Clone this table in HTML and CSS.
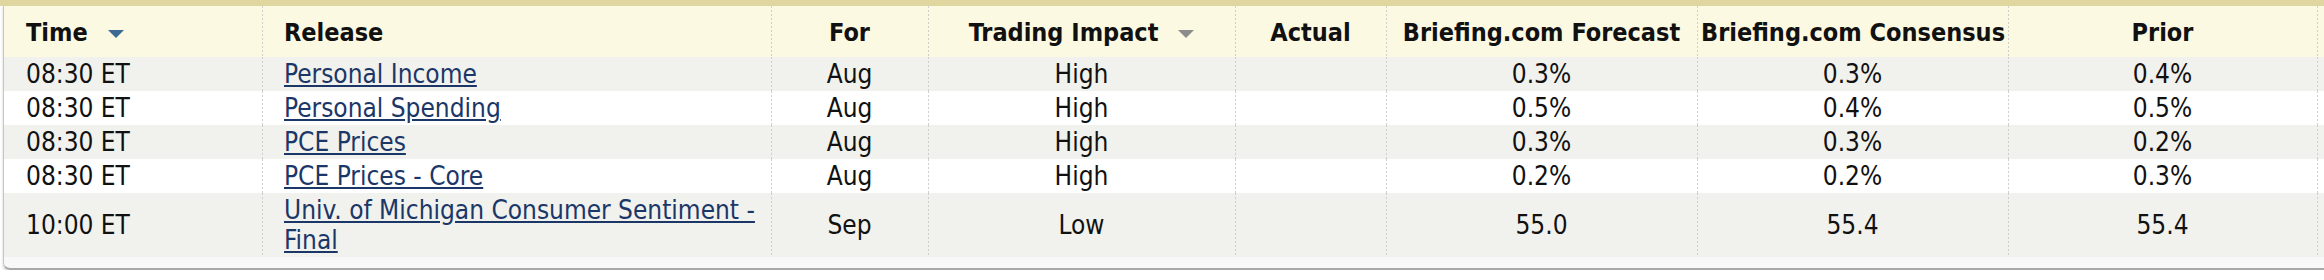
FILE: index.html
```html
<!DOCTYPE html>
<html lang="en">
<head>
    <meta charset="UTF-8">
    <title>Economic Calendar</title>
    <link rel="stylesheet" href="styles.css">
</head>
<body>
    <div class="topbar"></div>
    <div class="panel">
        <table class="calendar">
            <colgroup>
                <col class="c-time">
                <col class="c-release">
                <col class="c-for">
                <col class="c-impact">
                <col class="c-actual">
                <col class="c-forecast">
                <col class="c-consensus">
                <col class="c-prior">
                <col class="c-rest">
            </colgroup>
            <thead>
                <tr>
                    <th class="left">Time <span class="sort active"></span></th>
                    <th class="left">Release</th>
                    <th>For</th>
                    <th>Trading Impact <span class="sort"></span></th>
                    <th>Actual</th>
                    <th>Briefing.com Forecast</th>
                    <th>Briefing.com Consensus</th>
                    <th>Prior</th>
                    <th></th>
                </tr>
            </thead>
            <tbody>
                <tr>
                    <td class="left">08:30 ET</td>
                    <td class="left"><a href="#">Personal Income</a></td>
                    <td>Aug</td>
                    <td>High</td>
                    <td></td>
                    <td>0.3%</td>
                    <td>0.3%</td>
                    <td>0.4%</td>
                    <td></td>
                </tr>
                <tr>
                    <td class="left">08:30 ET</td>
                    <td class="left"><a href="#">Personal Spending</a></td>
                    <td>Aug</td>
                    <td>High</td>
                    <td></td>
                    <td>0.5%</td>
                    <td>0.4%</td>
                    <td>0.5%</td>
                    <td></td>
                </tr>
                <tr>
                    <td class="left">08:30 ET</td>
                    <td class="left"><a href="#">PCE Prices</a></td>
                    <td>Aug</td>
                    <td>High</td>
                    <td></td>
                    <td>0.3%</td>
                    <td>0.3%</td>
                    <td>0.2%</td>
                    <td></td>
                </tr>
                <tr>
                    <td class="left">08:30 ET</td>
                    <td class="left"><a href="#">PCE Prices - Core</a></td>
                    <td>Aug</td>
                    <td>High</td>
                    <td></td>
                    <td>0.2%</td>
                    <td>0.2%</td>
                    <td>0.3%</td>
                    <td></td>
                </tr>
                <tr>
                    <td class="left">10:00 ET</td>
                    <td class="left"><a href="#">Univ. of Michigan Consumer Sentiment - Final</a></td>
                    <td>Sep</td>
                    <td>Low</td>
                    <td></td>
                    <td>55.0</td>
                    <td>55.4</td>
                    <td>55.4</td>
                    <td></td>
                </tr>
            </tbody>
        </table>
    </div>
</body>
</html>
```

FILE: styles.css
```css
body {
    margin: 0;
    width: 2324px;
    overflow: hidden;
    background: #fff;
    font-family: "DejaVu Sans Condensed", "DejaVu Sans", sans-serif;
    font-size: 26px;
    color: #111;
}

.topbar {
    height: 6px;
    width: 2360px;
    background: #dfd6a0;
}

.panel {
    width: 2360px;
    margin-left: 3px;
    padding-bottom: 11px;
    border-left: 1px solid #c6c6c6;
    border-bottom: 2px solid #a8a8a8;
    border-radius: 0 0 0 7px;
    background: linear-gradient(to bottom, #ececea 0, #efefef 40%, #f8f8f8 100%);
    box-shadow: 0 2px 3px rgba(0, 0, 0, 0.18);
}

.calendar {
    table-layout: fixed;
    width: 2356px;
    border-collapse: separate;
    border-spacing: 0;
}

.c-time { width: 258px; }
.c-release { width: 509px; }
.c-for { width: 157px; }
.c-impact { width: 307px; }
.c-actual { width: 151px; }
.c-forecast { width: 311px; }
.c-consensus { width: 311px; }
.c-prior { width: 309px; }

th, td {
    text-align: center;
    vertical-align: middle;
    background-image: linear-gradient(to bottom, #cfcfcf 50%, transparent 50%);
    background-size: 1px 4px;
    background-repeat: repeat-y;
    background-position: left top;
}

th:first-child, td:first-child {
    background-image: none;
}

th {
    height: 29px;
    padding: 12px 4px 10px;
    line-height: 29px;
    font-size: 25px;
    background-color: #fcf9e3;
    font-weight: bold;
    white-space: nowrap;
}

td {
    padding: 2px 4px;
    line-height: 30px;
}

th.left, td.left {
    text-align: left;
    padding-left: 22px;
}

tbody tr:nth-child(odd) td {
    background-color: #f1f1ed;
}

tbody tr:nth-child(even) td {
    background-color: #fff;
}

td a {
    color: #1b3768;
}

.sort {
    display: inline-block;
    margin-left: 12px;
    vertical-align: middle;
    border-left: 8px solid transparent;
    border-right: 8px solid transparent;
    border-top: 8px solid #8c8c8c;
}

.sort.active {
    border-top-color: #3b6a92;
}
```
